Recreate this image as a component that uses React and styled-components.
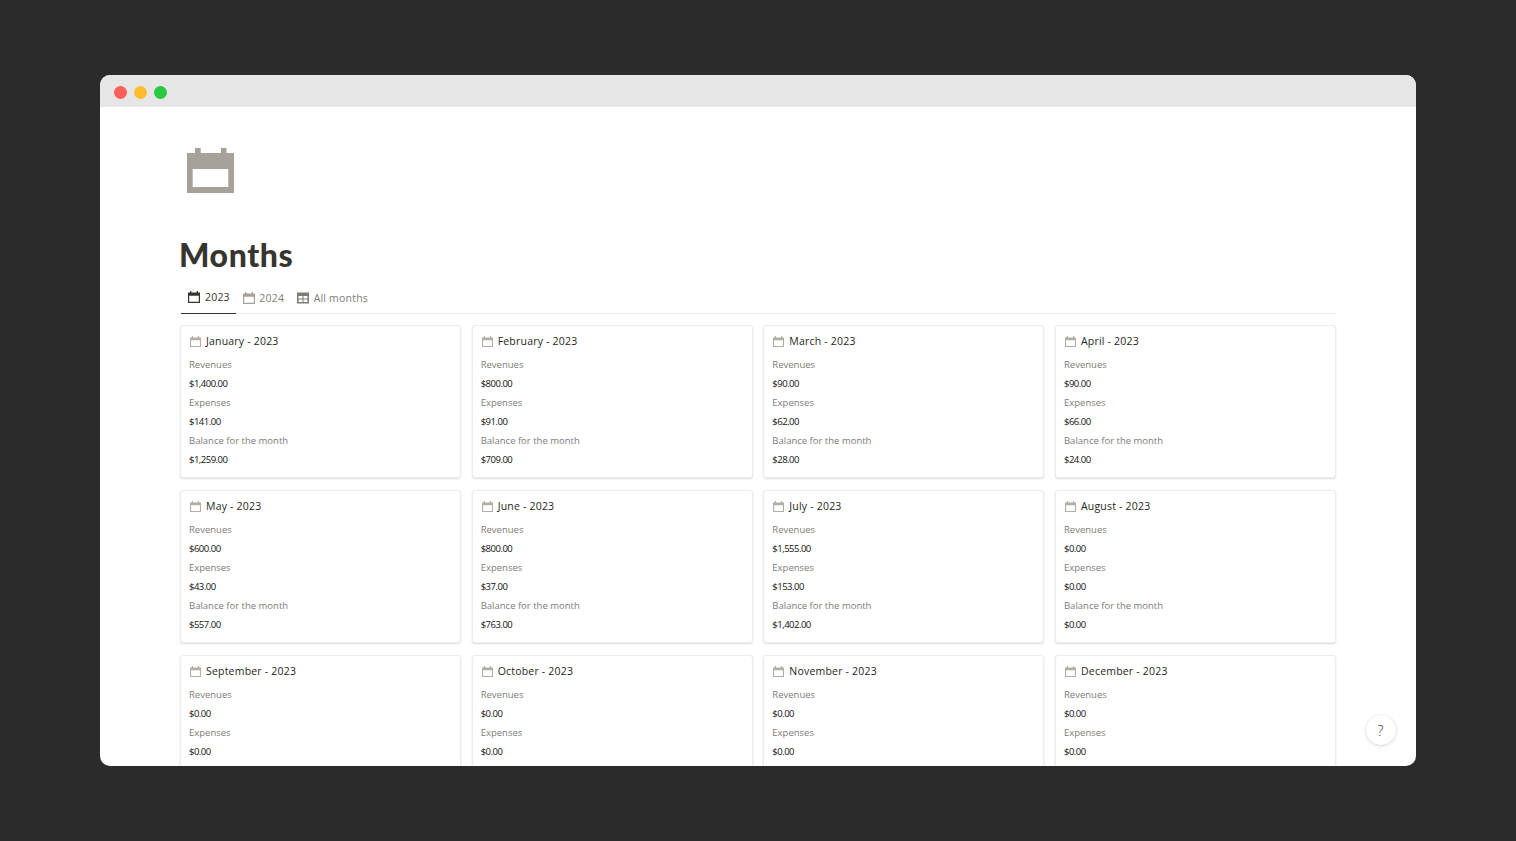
import React from "react";
import styled, { createGlobalStyle } from "styled-components";

const GlobalStyle = createGlobalStyle`
  html, body {
    margin: 0;
    height: 100%;
    background: #2b2b2b;
    font-family: "Open Sans", "Noto Sans", sans-serif;
  }
  * { box-sizing: border-box; }
`;

const months = [
  ["January", "$1,400.00", "$141.00", "$1,259.00"],
  ["February", "$800.00", "$91.00", "$709.00"],
  ["March", "$90.00", "$62.00", "$28.00"],
  ["April", "$90.00", "$66.00", "$24.00"],
  ["May", "$600.00", "$43.00", "$557.00"],
  ["June", "$800.00", "$37.00", "$763.00"],
  ["July", "$1,555.00", "$153.00", "$1,402.00"],
  ["August", "$0.00", "$0.00", "$0.00"],
  ["September", "$0.00", "$0.00", "$0.00"],
  ["October", "$0.00", "$0.00", "$0.00"],
  ["November", "$0.00", "$0.00", "$0.00"],
  ["December", "$0.00", "$0.00", "$0.00"],
];

const BigCalendar = () => (
  <svg width="48" height="48" viewBox="0 0 48 48" fill="#a7a299">
    <path
      fillRule="evenodd"
      d="M8 1h5.700v5H34V1h5.500v5H47v40H0V6h8zM5.700 22v18h35.600V22z"
    />
  </svg>
);

const SmallCalendar = ({ color, size = 12 }) => (
  <svg width={size} height={size} viewBox="0 0 12 12" fill={color}>
    <path
      fillRule="evenodd"
      d="M2 0h1.300v1.500h5.400V0H10v1.500h2V12H0V1.500h2zM1.200 4.700v6.100h9.600V4.700z"
    />
  </svg>
);

const TableIcon = ({ color }) => (
  <svg width="12" height="12" viewBox="0 0 12 12" fill={color}>
    <path
      fillRule="evenodd"
      d="M0 .5h12v11H0zM1.500 4v2.500h4V4zm5 0v2.500h4V4zm-5 3.500V10h4V7.500zm5 0V10h4V7.500z"
    />
  </svg>
);

const App = () => (
  <>
    <GlobalStyle />
    <Screen>
      <Window>
        <TitleBar>
          <Light color="#ff5f57" />
          <Light color="#febc2e" />
          <Light color="#28c840" />
        </TitleBar>
        <Page>
          <PageIcon>
            <BigCalendar />
          </PageIcon>
          <Title>Months</Title>
          <Tabs>
            <Tab $active>
              <SmallCalendar color="#37352f" />
              2023
            </Tab>
            <Tab>
              <SmallCalendar color="#a7a299" />
              2024
            </Tab>
            <Tab>
              <TableIcon color="#7d7c78" />
              All months
            </Tab>
          </Tabs>
          <Grid>
            {months.map(([name, revenues, expenses, balance]) => (
              <Card key={name}>
                <CardTitle>
                  <SmallCalendar color="#b3aea5" size={11} />
                  {name} - 2023
                </CardTitle>
                <Label>Revenues</Label>
                <Value>{revenues}</Value>
                <Label>Expenses</Label>
                <Value>{expenses}</Value>
                <Label>Balance for the month</Label>
                <Value>{balance}</Value>
              </Card>
            ))}
          </Grid>
          <Help>?</Help>
        </Page>
      </Window>
    </Screen>
  </>
);

export default App;

const Screen = styled.div`
  height: 841px;
  padding: 75px 100px;
  overflow: hidden;
`;

const Window = styled.div`
  width: 1316px;
  height: 691px;
  border-radius: 10px;
  overflow: hidden;
  background: #fff;
  display: flex;
  flex-direction: column;
`;

const TitleBar = styled.div`
  height: 32px;
  flex: none;
  background: #e6e6e6;
  display: flex;
  align-items: center;
  gap: 7px;
  padding: 2px 0 0 14px;
`;

const Light = styled.span`
  width: 13px;
  height: 13px;
  border-radius: 50%;
  background: ${(p) => p.color};
`;

const Page = styled.div`
  position: relative;
  flex: 1;
  overflow: hidden;
  padding: 0 80px;
`;

const PageIcon = styled.div`
  height: 48px;
  margin: 40px 0 0 7px;
  svg {
    display: block;
  }
`;

const Title = styled.h1`
  margin: 39px 0 0 -1px;
  height: 45px;
  font-family: "Lato", "Open Sans", sans-serif;
  font-size: 32px;
  line-height: 42px;
  font-weight: 900;
  letter-spacing: 0.6px;
  color: #37352f;
`;

const Tabs = styled.div`
  display: flex;
  height: 32px;
  margin-top: 3px;
  border-bottom: 1px solid #ebebea;
`;

const Tab = styled.div`
  height: 32px;
  padding: 0 6px 1px 7px;
  margin-left: ${(p) => (p.$active ? "1px" : "0")};
  display: flex;
  align-items: center;
  gap: ${(p) => (p.$active ? "5px" : "4.500px")};
  font-size: 10.5px;
  letter-spacing: 0.2px;
  color: ${(p) => (p.$active ? "#37352f" : "#7d7c78")};
  border-bottom: ${(p) => (p.$active ? "1px solid #37352f" : "none")};
`;

const Grid = styled.div`
  display: grid;
  grid-template-columns: repeat(4, 1fr);
  column-gap: 10.67px;
  row-gap: 12px;
  margin-top: 11px;
`;

const Card = styled.div`
  height: 153px;
  padding: 6px 8px 0;
  border: 1px solid #ececeb;
  border-radius: 3px;
  background: #fff;
  box-shadow: 0 1px 2px rgba(15, 15, 15, 0.14);
`;

const CardTitle = styled.div`
  display: flex;
  align-items: center;
  gap: 5px;
  height: 18px;
  margin-bottom: 5px;
  font-size: 10.5px;
  letter-spacing: 0.2px;
  color: #1f1f1c;
  svg {
    margin-left: 1px;
  }
`;

const Label = styled.div`
  height: 19px;
  line-height: 19px;
  font-size: 9.5px;
  color: #7d7c78;
`;

const Value = styled.div`
  height: 19px;
  line-height: 19px;
  font-size: 9.5px;
  letter-spacing: -0.5px;
  color: #111;
`;

const Help = styled.div`
  position: absolute;
  right: 20.500px;
  bottom: 21px;
  width: 30px;
  height: 30px;
  border-radius: 50%;
  background: #fff;
  box-shadow: 0 0 0 1px rgba(15, 15, 15, 0.06), 0 2px 4px rgba(15, 15, 15, 0.08);
  display: flex;
  align-items: center;
  justify-content: center;
  font-size: 14px;
  font-weight: 300;
  color: #37352f;
`;
